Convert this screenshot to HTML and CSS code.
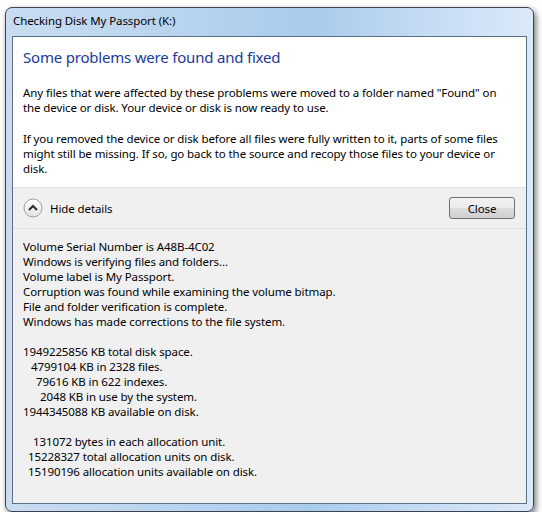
FILE: index.html
```html
<!DOCTYPE html>
<html lang="en">
<head>
  <meta charset="UTF-8" />
  <title>Checking Disk My Passport (K:)</title>
  <link rel="stylesheet" href="styles.css">
</head>
<body>
  <div class="window">
    <div class="titlebar">Checking Disk My Passport (K:)</div>
    <div class="panel">
      <div class="main">
        <h1>Some problems were found and fixed</h1>
        <p>Any files that were affected by these problems were moved to a folder named "Found" on the device or disk. Your device or disk is now ready to use.</p>
        <p>If you removed the device or disk before all files were fully written to it, parts of some files might still be missing. If so, go back to the source and recopy those files to your device or disk.</p>
      </div>
      <div class="footer">
        <div class="toggle">
          <span class="chevron">
            <svg width="20" height="20" viewBox="0 0 20 20">
              <defs>
                <linearGradient id="btn" x1="0" y1="0" x2="0" y2="1">
                  <stop offset="0" stop-color="#ffffff"/>
                  <stop offset="1" stop-color="#e2e2e2"/>
                </linearGradient>
              </defs>
              <circle cx="10" cy="10" r="9" fill="url(#btn)" stroke="#a0a0a0"/>
              <path d="M6 12 L10 8 L14 12" fill="none" stroke="#2b2b2b" stroke-width="2"/>
            </svg>
          </span>
          <span>Hide details</span>
        </div>
        <button class="close">Close</button>
      </div>
      <div class="details">
        <div>Volume Serial Number is A48B-4C02</div>
        <div>Windows is verifying files and folders...</div>
        <div>Volume label is My Passport.</div>
        <div>Corruption was found while examining the volume bitmap.</div>
        <div>File and folder verification is complete.</div>
        <div>Windows has made corrections to the file system.</div>
        <div class="blank"></div>
        <div>1949225856 KB total disk space.</div>
        <div class="in2">4799104 KB in 2328 files.</div>
        <div class="in3">79616 KB in 622 indexes.</div>
        <div class="in4">2048 KB in use by the system.</div>
        <div>1944345088 KB available on disk.</div>
        <div class="blank"></div>
        <div class="in2b">131072 bytes in each allocation unit.</div>
        <div class="in1">15228327 total allocation units on disk.</div>
        <div class="in1">15190196 allocation units available on disk.</div>
      </div>
    </div>
  </div>
</body>
</html>
```

FILE: styles.css
```css
body { margin: 0; background: #fff; font-family: "Noto Sans", "Open Sans", sans-serif; font-size: 11.5px; letter-spacing: -0.1px; color: #000; }
.window {
  margin: 7px 0 0 5px; width: 527px; height: 503px;
  border: 1px solid #3b4350; border-radius: 7px;
  background: linear-gradient(90deg, #c9dcf1 0%, #b7d3ef 35%, #a9cbec 58%, #c6dcf4 80%, #dbe9f9 100%);
  box-shadow: 2px 3px 6px rgba(0,0,0,0.55);
  display: flex; flex-direction: column;
}
.titlebar { height: 28px; line-height: 26px; padding-left: 7px; }
.panel {
  flex: 1; margin: 0 6px 7px 6px;
  border: 1px solid #5f6f82; background: #f0f0f0;
  display: flex; flex-direction: column;
}
.main { background: #fff; padding: 10px 10px 11px 10px; border-bottom: 1px solid #dfdfdf; }
h1 { margin: 0 0 17px 0; font-size: 15px; line-height: 21px; letter-spacing: -0.2px; font-weight: normal; color: #1a3a9a; }
p { margin: 0; line-height: 15px; }
p + p { margin-top: 16px; }
.footer {
  height: 40px; display: flex; align-items: center; justify-content: space-between;
  padding: 0 11px 0 10px; border-bottom: 1px solid #dfdfdf;
}
.toggle { display: flex; align-items: center; gap: 7px; }
.chevron { display: flex; }
.close {
  width: 66px; height: 22px; padding: 0; font: inherit; letter-spacing: inherit;
  border: 1px solid #707070; border-radius: 3px;
  background: linear-gradient(#f2f2f2 0%, #ebebeb 50%, #dddddd 51%, #cfcfcf 100%);
}
.details { padding: 10px 10px 0 10px; line-height: 15px; }
.blank { height: 15px; }
.in1 { padding-left: 5px; }
.in2 { padding-left: 8px; }
.in2b { padding-left: 10px; }
.in3 { padding-left: 13px; }
.in4 { padding-left: 17px; }
```
